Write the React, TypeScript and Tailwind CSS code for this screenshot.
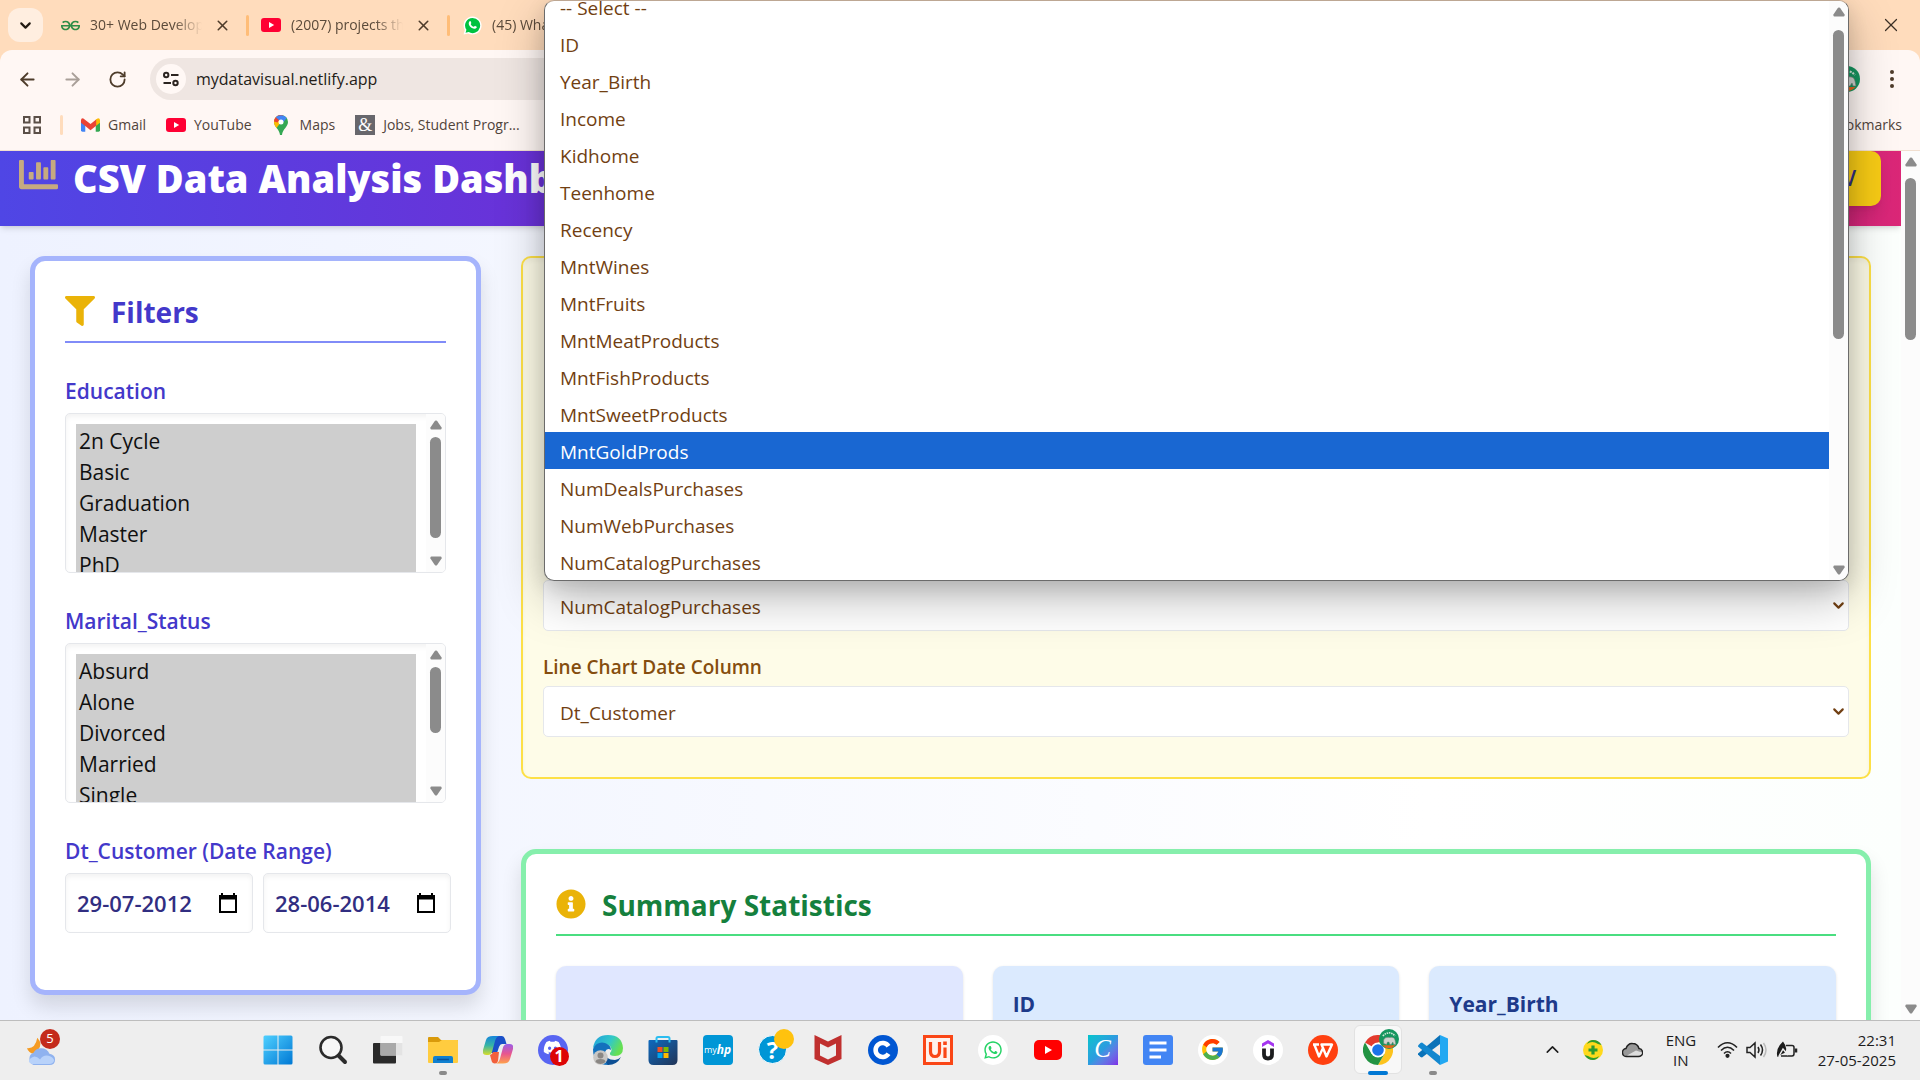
import React from "react";
import { FaChartBar, FaFilter, FaInfoCircle, FaWhatsapp, FaDiscord } from "react-icons/fa";
import { SiGeeksforgeeks } from "react-icons/si";
import { FcGoogle } from "react-icons/fc";
import { ArrowLeft, ArrowRight, ChevronDown, ChevronUp, RotateCw, X } from "lucide-react";

const columns = [
  "-- Select --",
  "ID",
  "Year_Birth",
  "Income",
  "Kidhome",
  "Teenhome",
  "Recency",
  "MntWines",
  "MntFruits",
  "MntMeatProducts",
  "MntFishProducts",
  "MntSweetProducts",
  "MntGoldProds",
  "NumDealsPurchases",
  "NumWebPurchases",
  "NumCatalogPurchases",
];

function ScrollBar({ thumb, className = "" }: { thumb: string; className?: string }) {
  return (
    <div aria-hidden="true" className={`flex w-[19px] shrink-0 flex-col items-center bg-[#fcfcfc] ${className}`}>
      <svg width="12" height="10" viewBox="0 0 12 10" className="shrink-0">
        <path d="M5 .8Q6 0 7 .8L11.6 7.6Q12 9.4 10.6 9.5H1.4Q0 9.4.4 7.6Z" fill="#8b8b8b" />
      </svg>
      <div className={`w-[11px] shrink-0 rounded-full bg-[#8b8b8b] ${thumb}`} />
      <svg width="12" height="10" viewBox="0 0 12 10" className="mt-auto shrink-0">
        <path d="M5 9.2Q6 10 7 9.2L11.6 2.4Q12 .6 10.6.5H1.4Q0 .6.4 2.4Z" fill="#8b8b8b" />
      </svg>
    </div>
  );
}

function YouTubeLogo({ className = "" }: { className?: string }) {
  return (
    <svg viewBox="0 0 20 14" className={className} aria-hidden="true">
      <rect width="20" height="14" rx="3" fill="#ff0033" />
      <path d="M8 4.1v5.8L13.2 7z" fill="#fff" />
    </svg>
  );
}

function Tab({ icon, title, width, closable = true }: { icon: React.ReactNode; title: string; width: string; closable?: boolean }) {
  return (
    <div className="flex h-9 items-center">
      <span className="flex w-5 justify-center">{icon}</span>
      <span className={`ml-2.5 overflow-hidden text-sm whitespace-nowrap text-[#5b4a3a] mask-r-from-75% ${width}`}>{title}</span>
      {closable && (
        <>
          <button aria-label={`Close ${title}`} className="ml-3 text-[#4e3c2a]">
            <X size={17} strokeWidth={2.2} />
          </button>
          <span className="ml-[15px] h-[21px] w-[3px] rounded-full bg-[#ffbd78]" />
        </>
      )}
    </div>
  );
}

function Bookmark({ icon, children }: { icon: React.ReactNode; children: React.ReactNode }) {
  return (
    <a href="#" className="flex items-center gap-2 text-sm whitespace-nowrap text-[#51443b]">
      {icon}
      {children}
    </a>
  );
}

function ElephantAvatar({ className = "" }: { className?: string }) {
  return (
    <svg viewBox="0 0 26 26" className={className} aria-hidden="true">
      <circle cx="13" cy="13" r="13" fill="#16965f" />
      <path d="M5 9q8-8 16 0" stroke="#d6e9dc" strokeWidth="2" strokeDasharray="2 1" fill="none" />
      <path d="M6 19v-5q2-4 8-3 6-1 7 4l1 5h-3l-1-3-2 3h-2l-1-3h-2l-1 3z" fill="#cfd3cf" stroke="#6b7a70" strokeWidth=".6" />
      <path d="M4.500 21h17q-3.500 4-8.500 4t-8.500-4z" fill="#e0661f" />
    </svg>
  );
}

function BrowserChrome() {
  return (
    <div className="shrink-0 bg-[#ffdcbc]">
      <div className="flex h-[50px] items-center pr-[18px] pl-2">
        <button aria-label="Search tabs" className="mr-[17px] flex h-[34px] w-[35px] items-center justify-center rounded-xl bg-[#ffeee0] text-[#221a12]">
          <ChevronDown size={17} strokeWidth={3} />
        </button>
        <div className="flex min-w-0 gap-3 overflow-hidden">
          <Tab width="w-[112px]" title="30+ Web Development" icon={<SiGeeksforgeeks size={19} color="#2f8d46" />} />
          <Tab width="w-[112px]" title="(2007) projects that" icon={<YouTubeLogo className="w-5" />} />
          <Tab
            width="w-[120px]"
            title="(45) WhatsApp"
            closable={false}
            icon={
              <svg viewBox="0 0 20 20" className="w-[19px]">
                <path d="M10 .5a9.500 9.500 0 1 1-4.600 17.800L.6 19.500l1.300-4.700A9.500 9.500 0 0 1 10 .5z" fill="#fff" />
                <path d="M10 2a8 8 0 1 1-4 14.900l-3.300.8.9-3.200A8 8 0 0 1 10 2z" fill="#00c240" />
                <path d="M6.800 5.700c.8-.8 1.300-.3 1.900 1.300.3.700-.7 1-.5 1.600.7 1.400 1.800 2.300 3.100 2.800.6.200 1-1.200 1.600-1 1.700.7 2 .9 1.400 1.900-1 1.600-3 1.400-4.900.3C6.900 11 4.900 8 6.800 5.700z" fill="#fff" />
              </svg>
            }
          />
        </div>
        <button aria-label="Close window" className="ml-auto text-[#3b3026]">
          <X size={22} strokeWidth={1.3} />
        </button>
      </div>
      <div className="rounded-t-xl border-b border-[#f1dfd0] bg-[#fff7f4]">
        <div className="flex h-[58px] items-center pr-5 pl-[17px] text-[#4e3c2a]">
          <button aria-label="Back"><ArrowLeft size={21} strokeWidth={2.2} /></button>
          <button aria-label="Forward" className="ml-6 text-[#a99f98]"><ArrowRight size={21} strokeWidth={2.2} /></button>
          <button aria-label="Reload" className="ml-[25px]"><RotateCw size={19} strokeWidth={2.3} /></button>
          <div className="ml-[23px] flex h-[42px] flex-1 items-center rounded-full bg-[#efe6e2] pl-1.5">
            <button aria-label="Site information" className="flex size-[30px] shrink-0 items-center justify-center rounded-full bg-[#fff8f5]">
              <svg width="16" height="16" viewBox="0 0 16 16" fill="none" stroke="#2b2420" strokeWidth="2">
                <circle cx="3.200" cy="4" r="2.200" />
                <path d="M8 4h7.500M.5 12H8" />
                <circle cx="12.500" cy="12" r="2.200" />
              </svg>
            </button>
            <input aria-label="Address" defaultValue="mydatavisual.netlify.app" className="ml-2.5 w-full bg-transparent text-base text-[#241c17] outline-none" />
          </div>
          <button aria-label="Profile" className="mr-6 ml-6"><ElephantAvatar className="size-[26px]" /></button>
          <button aria-label="Menu">
            <svg width="16" height="20" viewBox="0 0 16 20" fill="#4e3c2a"><circle cx="8" cy="3" r="2" /><circle cx="8" cy="10" r="2" /><circle cx="8" cy="17" r="2" /></svg>
          </button>
        </div>
        <div className="flex h-[42px] items-start pt-[7px] pr-[18px] pl-[23px]">
          <button aria-label="Apps" className="mt-px mr-[19px]">
            <svg width="18" height="18" viewBox="0 0 18 18" fill="none" stroke="#5b4f47" strokeWidth="2">
              <rect x="1" y="1" width="5.500" height="5.500" /><rect x="11.500" y="1" width="5.500" height="5.500" /><rect x="1" y="11.500" width="5.500" height="5.500" /><rect x="11.500" y="11.500" width="5.500" height="5.500" />
            </svg>
          </button>
          <span className="mr-[18px] h-5 w-[3px] rounded-full bg-[#ffdcbc]" />
          <div className="flex gap-5">
            <Bookmark
              icon={
                <svg viewBox="0 0 20 15" className="w-[19px]">
                  <path d="M0 2.500V13a1.500 1.500 0 0 0 1.500 1.500h3V5z" fill="#4285f4" />
                  <path d="M20 2.500V13a1.500 1.500 0 0 1-1.500 1.500h-3V5z" fill="#34a853" />
                  <path d="M15.500 1.500 18 .3q2 0 2 2V5l-4.500 3.500z" fill="#fbbc04" />
                  <path d="M0 2.300Q0 0 2.500.4l7.500 6 6-4.700v6.500L10 13 4.500 8.500 0 5z" fill="#ea4335" />
                </svg>
              }
            >
              Gmail
            </Bookmark>
            <Bookmark icon={<YouTubeLogo className="w-5" />}>YouTube</Bookmark>
            <Bookmark
              icon={
                <svg viewBox="0 0 14 20" className="mr-1 ml-0.5 w-[14px]">
                  <path d="M7 0a7 7 0 0 1 7 7c0 5-5.500 7-6 13H6C5.500 14 0 12 0 7a7 7 0 0 1 7-7z" fill="#34a853" />
                  <path d="M0 7a7 7 0 0 1 2-5l5 5-4.500 6C1 11 0 9.500 0 7z" fill="#fbbc04" />
                  <path d="M1.600 2.500A7 7 0 0 1 9 .3L3.500 7.500 0 6.500q.2-2.500 1.600-4z" fill="#ea4335" />
                  <path d="M4 .7Q10-1 12.800 3L8.500 8 5 5 1.800 2.300z" fill="#4285f4" />
                  <circle cx="7" cy="7" r="2.500" fill="#fff" />
                </svg>
              }
            >
              Maps
            </Bookmark>
            <Bookmark icon={<span className="flex size-5 items-center justify-center bg-[#68676c] font-['Liberation_Serif',serif] text-lg leading-none text-white">&amp;</span>}>
              Jobs, Student Progr...
            </Bookmark>
          </div>
          <span className="ml-auto"><Bookmark icon={null}>All Bookmarks</Bookmark></span>
        </div>
      </div>
    </div>
  );
}

function FilterList({ id, label, options, thumb }: { id: string; label: string; options: string[]; thumb: string }) {
  return (
    <div className="mb-[30px]">
      <label htmlFor={id} className="mb-1 block text-[21px] leading-9 font-semibold text-[#4338ca]">{label}</label>
      <div className="flex h-40 overflow-hidden rounded-[5px] border border-[#e5e7eb] bg-white shadow-[inset_0_3px_5px_rgba(0,0,0,0.05)]">
        <select id={id} multiple defaultValue={options} className="h-full min-w-0 flex-1 overflow-hidden bg-transparent px-2.5 pt-2.5 text-[21px] outline-none [scrollbar-width:none]">
          {options.map((o) => (
            <option key={o} className="h-[31px] px-[3px] pt-[3px] pb-0 text-[#101010] checked:bg-[#cecece]">{o}</option>
          ))}
        </select>
        <ScrollBar thumb={thumb} className="py-1.5" />
      </div>
    </div>
  );
}

function DateField({ label, value }: { label: string; value: string }) {
  return (
    <div className="flex h-[60px] w-[188px] shrink-0 items-center rounded-[5px] border border-[#e5e7eb] bg-white pr-[14px] pl-[11px] shadow-[inset_0_3px_5px_rgba(0,0,0,0.05)]">
      <input aria-label={label} defaultValue={value} className="w-full min-w-0 bg-transparent text-[22px] font-semibold text-[#312e81] outline-none" />
      <button aria-label={`Open calendar for ${label}`} className="shrink-0">
        <svg width="20" height="20" viewBox="0 0 20 20">
          <path d="M3 0h2v2h10V0h2v2h2v18H1V2h2z" fill="#000" />
          <path d="M3 6.500h14V18H3z" fill="#fff" />
        </svg>
      </button>
    </div>
  );
}

function ChartSelect({ id, label, value, hideLabel = false }: { id: string; label: string; value: string; hideLabel?: boolean }) {
  return (
    <div>
      <label htmlFor={id} className={hideLabel ? "sr-only" : "mb-[5px] block text-[19px] leading-7 font-semibold text-[#854d0e]"}>{label}</label>
      <div className="relative">
        <select id={id} defaultValue={value} className="h-[51px] w-full appearance-none rounded-[5px] border border-[#e5e7eb] bg-white px-4 pt-[3px] text-[19px] text-[#713f12] outline-none">
          <option>{value}</option>
        </select>
        <ChevronDown size={17} strokeWidth={3} className="pointer-events-none absolute top-[17px] right-[2px] text-[#713f12]" />
      </div>
    </div>
  );
}

function StatCard({ title, className }: { title: string; className: string }) {
  return (
    <article className={`h-40 rounded-[10px] px-5 pt-5 shadow-[0_1px_3px_rgba(0,0,0,0.12)] ${className}`}>
      <h3 className="text-[21px] leading-9 font-bold text-[#1e3a8a]">{title}</h3>
    </article>
  );
}

function Dashboard() {
  return (
    <div className="flex min-h-0 flex-1">
      <div className="min-w-0 flex-1 overflow-hidden bg-linear-to-r from-[#eef2ff] via-white via-75% to-[#fcfffd]">
        <header className="flex h-[75px] justify-between bg-linear-to-r/srgb from-[#4f46e5] via-[#7e22ce] to-[#db2777] pr-5 pl-[19px] shadow-md">
          <h1 className="flex gap-[15px] text-[38px] leading-[54px] font-extrabold whitespace-nowrap text-white">
            <FaChartBar size={39} className="mt-1 text-[#c6aa80]" />
            CSV Data Analysis Dashboard
          </h1>
          <button className="h-[55px] rounded-[10px] bg-[#f7cb15] px-[25px] text-[21px] font-semibold text-[#312e81] shadow-lg">Upload CSV</button>
        </header>
        <main className="flex items-start gap-10 p-[30px]">
          <aside className="w-[451px] shrink-0 rounded-[15px] border-[5px] border-[#a5b4fc] bg-white px-[30px] pt-[30px] pb-[57px] shadow-[0_12px_20px_rgba(0,0,0,0.12)]">
            <h2 className="mb-[30px] flex h-[52px] gap-4 border-b-2 border-[#818cf8] text-[28px] leading-[42px] font-bold text-[#4338ca]">
              <FaFilter size={30} className="mt-[5px] text-[#eab308]" />
              Filters
            </h2>
            <FilterList id="education" label="Education" options={["2n Cycle", "Basic", "Graduation", "Master", "PhD"]} thumb="mt-[7px] h-[101px]" />
            <FilterList id="marital" label="Marital_Status" options={["Absurd", "Alone", "Divorced", "Married", "Single"]} thumb="mt-[7px] h-[66px]" />
            <fieldset>
              <legend className="mb-1 text-[21px] leading-9 font-semibold text-[#4338ca]">Dt_Customer (Date Range)</legend>
              <div className="flex gap-2.5">
                <DateField label="From date" value="29-07-2012" />
                <DateField label="To date" value="28-06-2014" />
              </div>
            </fieldset>
          </aside>
          <div className="min-w-0 flex-1">
            <section className="flex h-[523px] flex-col justify-end gap-[22px] rounded-[10px] border-2 border-[#fde047] bg-[#fefce8] px-5 pb-10 shadow-[inset_0_3px_5px_rgba(0,0,0,0.04)]">
              <ChartSelect id="value-column" label="Line Chart Value Column" value="NumCatalogPurchases" hideLabel />
              <ChartSelect id="date-column" label="Line Chart Date Column" value="Dt_Customer" />
            </section>
            <section className="mt-[70px] rounded-[15px] border-[5px] border-[#86efac] bg-white p-[30px] shadow-[0_12px_20px_rgba(0,0,0,0.12)]">
              <h2 className="mb-[30px] flex h-[52px] gap-4 border-b-2 border-[#4ade80] text-[28px] leading-[42px] font-bold text-[#15803d]">
                <FaInfoCircle size={30} className="mt-[5px] text-[#eab308]" />
                Summary Statistics
              </h2>
              <div className="grid grid-cols-3 gap-[30px]">
                <StatCard title="" className="bg-[#e0e7ff]" />
                <StatCard title="ID" className="bg-[#dbeafe]" />
                <StatCard title="Year_Birth" className="bg-[#dbeafe]" />
              </div>
            </section>
          </div>
        </main>
      </div>
      <ScrollBar thumb="mt-[11px] h-[162px]" className="py-1.5" />
    </div>
  );
}

function ColumnMenu() {
  return (
    <div className="absolute top-0 right-[71px] left-[544px] flex h-[581px] overflow-hidden rounded-[10px] border border-[#6b6b6b] border-t-[#bda793] bg-white shadow-[0_18px_48px_rgba(0,0,0,0.26),0_6px_20px_rgba(0,0,0,0.12)]">
      <ul role="listbox" aria-label="Column" className="-mt-[13px] flex-1">
        {columns.map((c) => (
          <li
            key={c}
            role="option"
            aria-selected={c === "MntGoldProds"}
            className="h-[37px] px-[15px] text-[19px] leading-10 text-[#713f12] aria-selected:bg-[#1967d2] aria-selected:text-white"
          >
            {c}
          </li>
        ))}
      </ul>
      <ScrollBar thumb="mt-[13px] h-[309px]" className="pt-1.5 pb-[5px]" />
    </div>
  );
}

const box = "size-[30px]";

const apps: { name: string; icon: React.ReactNode; running?: boolean; active?: boolean }[] = [
  {
    name: "Start",
    icon: (
      <svg viewBox="0 0 30 30" className={box}>
        <defs><linearGradient id="win" x1="0" y1="0" x2="1" y2="1"><stop offset="0" stopColor="#4fd0ff" /><stop offset="1" stopColor="#0078d4" /></linearGradient></defs>
        <path d="M2 .5h12.500v14H.5V2Q.5.500 2 .5zM15.500.5H28q1.500 0 1.500 1.500v12.500h-14zM.5 15.500h14v14H2Q.5 29.500.5 28zM15.500 15.500h14V28q0 1.500-1.500 1.500H15.500z" fill="url(#win)" />
      </svg>
    ),
  },
  {
    name: "Search",
    icon: (
      <svg viewBox="0 0 30 30" className={box} fill="none" stroke="#2b2b2b">
        <circle cx="13" cy="12.500" r="10.500" strokeWidth="2.600" fill="#f6f6f6" />
        <path d="m20.500 20.500 6.500 6.500" strokeWidth="4" strokeLinecap="round" />
      </svg>
    ),
  },
  {
    name: "Task view",
    icon: (
      <svg viewBox="0 0 30 30" className={box}>
        <rect x="0" y="8" width="23" height="20.500" rx="1" fill="#2a2a2a" />
        <rect x="7.500" y="1" width="22" height="19.500" rx="1" fill="#f8f8f8" />
        <rect x="7.500" y="8" width="15.500" height="12.500" fill="#a9a9a9" />
        <rect x="23" y="8" width="6.500" height="12.500" fill="#e3e3e3" />
      </svg>
    ),
  },
  {
    name: "File Explorer",
    running: true,
    icon: (
      <svg viewBox="0 0 30 30" className={box}>
        <path d="M0 3q0-1 1-1h9l3 3h16q1 0 1 1v4H0z" fill="#d99a0b" />
        <path d="M0 7h11l3-2h15q1 0 1 1v21q0 1-1 1H1q-1 0-1-1z" fill="#ffcc3f" />
        <path d="M5 28v-5q0-2 2-2h16q2 0 2 2v5z" fill="#1080d0" />
        <path d="M9 24.500h12" stroke="#09539a" strokeWidth="1.500" />
      </svg>
    ),
  },
  {
    name: "Copilot",
    icon: (
      <svg viewBox="0 0 30 30" className={box}>
        <defs>
          <linearGradient id="cpa" x1="0" y1="0" x2="0" y2="1"><stop offset="0" stopColor="#1585dc" /><stop offset=".5" stopColor="#37b5a5" /><stop offset="1" stopColor="#d8dd2a" /></linearGradient>
          <linearGradient id="cpb" x1="0" y1="0" x2="0" y2="1"><stop offset="0" stopColor="#9b5de8" /><stop offset=".5" stopColor="#e8568f" /><stop offset="1" stopColor="#ffa14a" /></linearGradient>
        </defs>
        <path d="M11 1h8q2 0 3 3l1.500 5H19q-2 0-3 3l-2 6h-6l2-13q.3-4 1-4z" fill="#1a50c8" />
        <path d="M10 1h6q-3 1-4 5l-3 11q-1 3-4 3H3q-4 0-3-5L3 5q1-4 7-4z" fill="url(#cpa)" />
        <path d="M7 20q2 0 3-3h6l-1 9q-1 2.500-3 2.500-3 0-3.500-3z" fill="#f2603c" />
        <path d="M20 28.500h-7q3-1 4-5l3-11q1-3.500 4-3.500h3q4 0 3 5l-3 10q-1 4.500-7 4.500z" fill="url(#cpb)" />
      </svg>
    ),
  },
  {
    name: "Discord",
    icon: (
      <span className="relative flex size-[30px] items-center justify-center rounded-full bg-[#5865f2] text-white">
        <FaDiscord size={19} className="mb-1" />
        <span className="absolute -right-px -bottom-px flex size-[19px] items-center justify-center rounded-full bg-[#dd0505] text-[16px] leading-none font-bold">1</span>
      </span>
    ),
  },
  {
    name: "Edge",
    icon: (
      <svg viewBox="0 0 30 30" className={box}>
        <defs>
          <linearGradient id="eda" x1="0" y1="0" x2="1" y2=".4"><stop offset="0" stopColor="#209fdd" /><stop offset=".6" stopColor="#32c8c8" /><stop offset="1" stopColor="#66e052" /></linearGradient>
        </defs>
        <path d="M0 13Q2 0 15 0q14 0 15 13 0 8-8 8-6 0-5-3 3-3 0-7Q12 6 0 13z" fill="url(#eda)" />
        <path d="M0 14Q4 6 12 8q6 2 6 7-4-3-6 2-1 7 7 10l-4 3Q0 30 0 14z" fill="#1371bd" />
        <path d="M12 17q0 8 10 8 3 0 6-3-4 8-13 8-5-5-3-13z" fill="#0c4f94" />
        <circle cx="7.500" cy="22.500" r="7.300" fill="#c9c7c5" />
        <circle cx="7.500" cy="20.500" r="3" fill="#8a8784" />
        <path d="M2.500 27q0-3 5-3t5 3q-5 4-10 0z" fill="#8a8784" />
      </svg>
    ),
  },
  {
    name: "Microsoft Store",
    icon: (
      <svg viewBox="0 0 30 30" className={box}>
        <defs><linearGradient id="sto" x1="0" y1="0" x2="1" y2="1"><stop offset="0" stopColor="#0e6abf" /><stop offset="1" stopColor="#213456" /></linearGradient></defs>
        <path d="M8.500 8V3.500Q8.500 2 10 2h10q1.500 0 1.500 1.500V8" fill="none" stroke="#2bbdf0" strokeWidth="2" />
        <path d="M.5 6q0-1 1-1h27q1 0 1 1v19q0 5-5 5h-19q-5 0-5-5z" fill="url(#sto)" />
        <path d="M8.500 5v2.500M21.500 5v2.500" stroke="#2bbdf0" strokeWidth="2" />
        <path d="M9.500 12h5v5h-5z" fill="#f25022" /><path d="M15.500 12h5v5h-5z" fill="#7fba00" />
        <path d="M9.500 18h5v5h-5z" fill="#00a4ef" /><path d="M15.500 18h5v5h-5z" fill="#ffb900" />
      </svg>
    ),
  },
  {
    name: "myHP",
    icon: <span className="flex size-[30px] items-center justify-center rounded-sm bg-[#0096d6] text-[9px] leading-none text-white">my<i className="text-[12px] font-bold">hp</i></span>,
  },
  {
    name: "HP Support",
    icon: (
      <span className="relative flex size-[29px] items-center justify-center rounded-full border border-white bg-[#0096d6] text-[24px] leading-none font-bold text-white">
        ?<span className="absolute -top-[7px] -right-[8px] size-5 rounded-full bg-[#ffc20e]" />
      </span>
    ),
  },
  {
    name: "McAfee",
    icon: <svg viewBox="0 0 30 30" className={box}><path d="M1.500 0 15 6.500 28.500 0v24L15 30 1.500 24zM7 8.500v12l8 4 8-4v-12l-8 4z" fill="#c0302f" fillRule="evenodd" /></svg>,
  },
  {
    name: "Coursera",
    icon: <svg viewBox="0 0 30 30" className={box}><circle cx="15" cy="15" r="15" fill="#0056d2" /><path d="M20.500 11.200a7 7 0 1 0 0 7.600" fill="none" stroke="#fff" strokeWidth="4.600" /></svg>,
  },
  {
    name: "UiPath",
    icon: (
      <svg viewBox="0 0 30 30" className={box} fill="none" stroke="#fa4616">
        <rect width="30" height="30" fill="#fa4616" stroke="none" />
        <rect x="3" y="3" width="24" height="24" fill="#fff1ec" stroke="none" />
        <path d="M7.500 7v9.500q0 5 4.500 5t4.500-5V7M22 12.500V23" strokeWidth="3.200" />
        <path d="M22 6.500V10" strokeWidth="3.600" />
      </svg>
    ),
  },
  {
    name: "WhatsApp",
    icon: <span className="flex size-[30px] items-center justify-center rounded-full bg-white text-[#25d366]"><FaWhatsapp size={20} /></span>,
  },
  {
    name: "YouTube",
    icon: (
      <svg viewBox="0 0 28 20" className="w-7">
        <rect width="28" height="20" rx="5" fill="#ff0000" />
        <path d="M11 6v8l7-4z" fill="#fff" />
      </svg>
    ),
  },
  {
    name: "Canva",
    icon: <span className="flex size-[30px] items-center justify-center bg-linear-to-br from-[#00c4cc] via-[#2c9be0] to-[#7d2ae8] pb-0.5 font-['Liberation_Serif',serif] text-[25px] leading-none text-white italic">C</span>,
  },
  {
    name: "Docs",
    icon: <svg viewBox="0 0 30 30" className={box}><rect width="30" height="30" rx="3" fill="#4285f4" /><path d="M6.500 8h17M6.500 15h17M6.500 22H18" stroke="#fff" strokeWidth="2.800" /></svg>,
  },
  { name: "Google", icon: <span className="flex size-[30px] items-center justify-center rounded-full bg-white"><FcGoogle size={25} /></span> },
  {
    name: "Udemy",
    icon: (
      <svg viewBox="0 0 30 30" className={box}>
        <circle cx="15" cy="15" r="15" fill="#fff" />
        <path d="m9 8.500 6-3.500 6 3.500V12l-6-3.500L9 12z" fill="#a435f0" />
        <path d="M11 13.500v6q0 4 4 4t4-4v-6" fill="none" stroke="#1c1d1f" strokeWidth="3.800" />
      </svg>
    ),
  },
  {
    name: "WPS Office",
    icon: (
      <svg viewBox="0 0 30 30" className={box}>
        <circle cx="15" cy="15" r="15" fill="#ff4010" />
        <path d="M5 9.500h6M6.500 10l4.500 11.500 4-8.500 3.500 8.500L24 9.500H13.500L15 13" fill="none" stroke="#fff" strokeWidth="2.400" strokeLinejoin="round" />
      </svg>
    ),
  },
  {
    name: "Chrome",
    active: true,
    icon: (
      <span className="relative">
        <svg viewBox="0 0 30 30" className={box}>
          <path d="M15 15 2 7.500A15 15 0 0 1 28 7.500H15z" fill="#e33b2e" />
          <path d="M28 7.500A15 15 0 0 1 15 30l6.500-11.200L15 7.500z" fill="#fcc31e" />
          <path d="M15 30A15 15 0 0 1 2 7.500l6.500 11.300 13 0z" fill="#229342" />
          <circle cx="15" cy="15" r="7.500" fill="#fff" /><circle cx="15" cy="15" r="5.800" fill="#1a73e8" />
        </svg>
        <ElephantAvatar className="absolute -top-1.5 -right-1.5 size-5" />
      </span>
    ),
  },
  {
    name: "VS Code",
    running: true,
    icon: (
      <svg viewBox="0 0 30 30" className={box}>
        <path d="m22 0 8 3.500v23L22 30z" fill="#23a8f2" />
        <path d="M22 0v9L4 22.500 2.500 22 0 19.500v-1z" fill="#0a72b8" />
        <path d="M22 30v-9L4 7.500 2.500 8 0 10.500v1z" fill="#1287cf" />
      </svg>
    ),
  },
];

function Taskbar() {
  return (
    <footer className="relative flex h-[60px] shrink-0 items-center border-t border-[#bdbdbd] bg-[#eeeeee] pb-0.5">
      <button aria-label="Weather" className="ml-[26px] flex w-[224px]">
        <span className="relative">
          <svg width="30" height="30" viewBox="0 0 30 32">
            <path d="M11 3q6 6 1 13l-5 4Q2 19 0 14q9 1 11-11z" fill="#f59b23" />
            <path d="M7 32a7 7 0 0 1 0-13q2-5 8-5 7 0 9 6 6 1 6 6 0 6-6 6z" fill="#8fb2ef" />
            <path d="M2 28q1-4 6-5 3 0 6 3 3-5 9-4 5 1 6 5-1 4-5 4H7q-4 0-5-3z" fill="#b8d2fa" />
          </svg>
          <span className="absolute -top-[6px] left-[14px] flex size-5 items-center justify-center rounded-full bg-[#c42b1c] text-[13px] leading-none text-white">5</span>
        </span>
      </button>
      <nav aria-label="Applications" className="flex">
        {apps.map((a) => (
          <div key={a.name} className="relative flex h-[50px] w-[55px] items-center justify-center">
            <button
              aria-label={a.name}
              className={a.active ? "flex h-[49px] w-12 items-center justify-center rounded-md border border-[#e2e2e2] bg-[#f8f8f8]" : "flex h-[49px] w-12 items-center justify-center"}
            >
              {a.icon}
            </button>
            {a.running && <span className="absolute bottom-0 h-1 w-2 rounded-full bg-[#8a8a8a]" />}
            {a.active && <span className="absolute bottom-0 h-1 w-5 rounded-full bg-[#0078d4]" />}
          </div>
        ))}
      </nav>
      <div className="ml-auto flex items-center pr-6 text-[15px] leading-5 text-[#1c1c1c]">
        <button aria-label="Show hidden icons"><ChevronUp size={21} strokeWidth={1.8} /></button>
        <svg width="20" height="20" viewBox="0 0 20 20" className="ml-5" aria-hidden="true">
          <circle cx="10" cy="10" r="10" fill="#ffd91c" />
          <path d="M10 0a10 10 0 0 1 8.500 5L15 4Q9 0 4 4 6 0 10 0zM10 20a10 10 0 0 1-8.500-5L5 16q6 4 11 0-2 4-6 4z" fill="#2d9b2f" />
          <path d="M10 5.500v9M5.500 10h9" stroke="#2d9b2f" strokeWidth="3.200" />
        </svg>
        <svg width="21" height="16" viewBox="0 0 21 16" className="ml-[19px]" aria-hidden="true">
          <path d="M5 14.500a4 4 0 0 1-1-8Q6 1 10.500 1.500q5 0 6.500 5 3.500.5 3.500 4t-4 4z" fill="#999" stroke="#222" strokeWidth="1.500" />
          <path d="m5 13.500 9-5 6 2q0 3-4 3z" fill="#ddd" />
        </svg>
        <button className="ml-[23px] w-[30px] text-center">ENG IN</button>
        <svg width="21" height="17" viewBox="0 0 21 17" className="ml-[21px]" fill="none" stroke="#222" strokeWidth="1.600" aria-hidden="true">
          <path d="M1 6.500q9.500-9.500 19 0M4 9.500q6.500-6.500 13 0M7 12.500q3.500-3.500 7 0" /><circle cx="10.500" cy="14.800" r="1.300" fill="#222" />
        </svg>
        <svg width="22" height="18" viewBox="0 0 22 18" className="ml-2" fill="none" stroke="#222" strokeWidth="1.500" aria-hidden="true">
          <path d="M1 6.500h3l5-4.500v14l-5-4.500H1zM12 6q2 3 0 6M14.500 3.500q4 5.500 0 11" /><path d="M17.500 2q5 7 0 14" stroke="#bbb" />
        </svg>
        <svg width="22" height="18" viewBox="0 0 22 18" className="ml-2" fill="none" stroke="#222" strokeWidth="1.500" aria-hidden="true">
          <path d="M10 4.500h6q2 0 2 2v6q0 2.500-2 2.500H5" /><path d="M20 7.500v4" strokeWidth="2.500" />
          <path d="M7 .5q4 5 3 9-1 3-4 3.500L1.500 16Q-1 8 7 .5z" fill="#1c1c1c" stroke="none" /><path d="m3 15 4-7 5 6" stroke="#eee" />
        </svg>
        <div className="ml-5 text-right"><div>22:31</div><div>27-05-2025</div></div>
      </div>
    </footer>
  );
}

export default function App() {
  return (
    <div className="relative flex h-screen flex-col overflow-hidden font-['Open_Sans','Noto_Sans',sans-serif]">
      <BrowserChrome />
      <Dashboard />
      <Taskbar />
      <ColumnMenu />
    </div>
  );
}
